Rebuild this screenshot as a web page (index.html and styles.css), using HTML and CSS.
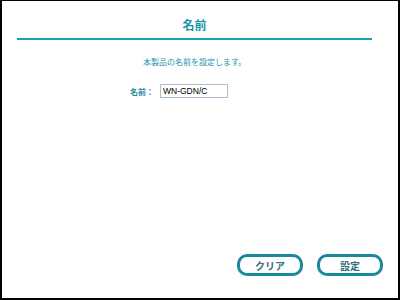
FILE: index.html
```html
<!DOCTYPE html>
<html lang="ja">
<head>
  <meta charset="UTF-8" />
  <title>名前</title>
  <link rel="stylesheet" href="styles.css">
</head>
<body>
  <div class="frame">
    <div class="header">
      <h1 class="title">名前</h1>
    </div>

    <p class="lead">本製品の名前を設定します。</p>

    <div class="field">
      <label for="devName" class="label">名前：</label>
      <input type="text" id="devName" class="input" value="WN-GDN/C">
    </div>

    <div class="spacer"></div>

    <div class="actions">
      <button class="btn">クリア</button>
      <button class="btn">設定</button>
    </div>
  </div>
</body>
</html>
```

FILE: styles.css
```css
html, body {
  margin: 0;
  padding: 0;
  background: #fff;
}

body {
  font-family: "Liberation Sans", "Noto Sans CJK JP", sans-serif;
}

.frame {
  width: 400px;
  height: 300px;
  box-sizing: border-box;
  border-style: solid;
  border-color: #000;
  border-width: 1px 2px 2px 2px;
  display: flex;
  flex-direction: column;
}

.header {
  margin: 17px 26px 0 15px;
  padding-bottom: 4px;
  border-bottom: 2px solid #1a9fb3;
}

.title {
  margin: 0;
  font-size: 12px;
  line-height: 16px;
  font-weight: bold;
  color: #1a93a8;
  text-align: center;
}

.lead {
  margin: 17px 26px 0 15px;
  font-size: 8px;
  line-height: 12px;
  color: #2396ab;
  text-align: center;
}

.field {
  display: flex;
  align-items: center;
  margin-top: 15px;
  padding-left: 128px;
}

.label {
  font-size: 8px;
  font-weight: bold;
  color: #1f8a9d;
  width: 30px;
}

.input {
  width: 68px;
  height: 14px;
  box-sizing: border-box;
  border: 1px solid #a9bfd6;
  padding: 0 2px;
  font-family: "Liberation Sans", sans-serif;
  font-size: 8.5px;
  color: #000;
  outline: none;
}

.spacer {
  flex: 1;
}

.actions {
  display: flex;
  justify-content: flex-end;
  gap: 14px;
  padding: 0 15px 22px 0;
}

.btn {
  width: 66px;
  height: 22px;
  box-sizing: border-box;
  border: 3px solid #178a9c;
  border-radius: 10px;
  background: #fff;
  color: #336f7d;
  font-family: "Noto Sans CJK JP", sans-serif;
  font-size: 10px;
  font-weight: bold;
  padding: 0;
  cursor: pointer;
}
```
